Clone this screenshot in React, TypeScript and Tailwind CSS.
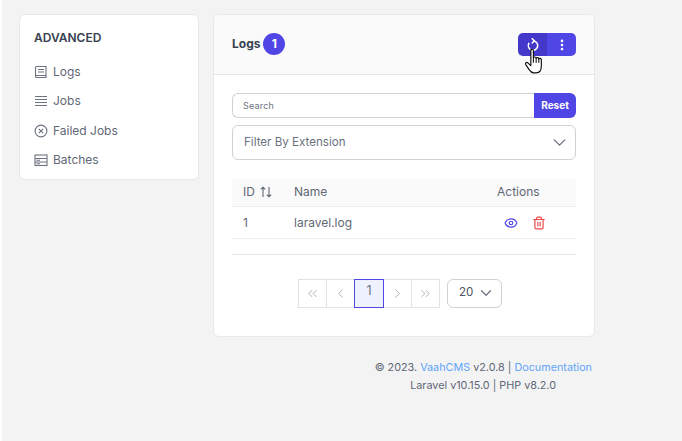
import React from "react";
import { EllipsisVertical, ChevronDown, ChevronsLeft, ChevronLeft, ChevronRight, ChevronsRight, Eye, Trash2 } from "lucide-react";

const Doc = () => (
  <svg width="14" height="14" viewBox="0 0 14 14" fill="none" stroke="#6b7280" strokeWidth="1.1">
    <path d="M2.5 1.5H12V12.5H2.5C1.8 12.5 1.5 12 1.5 11.5V2.5C1.5 2 1.8 1.5 2.5 1.5Z" />
    <path d="M4 4.5H10M4 7H10M1.5 10.5H12" />
  </svg>
);
const Bars = () => (
  <svg width="14" height="14" viewBox="0 0 14 14" fill="none" stroke="#6b7280" strokeWidth="1">
    <path d="M1 2.5H13M1 5.5H13M1 8.5H13M1 11.5H13" />
  </svg>
);
const CircleX = () => (
  <svg width="14" height="14" viewBox="0 0 14 14" fill="none" stroke="#6b7280" strokeWidth="1.1">
    <circle cx="7" cy="7" r="5.9" />
    <path d="M4.8 4.8L9.2 9.2M9.2 4.8L4.8 9.2" />
  </svg>
);
const Server = () => (
  <svg width="14" height="14" viewBox="0 0 14 14" fill="none" stroke="#6b7280" strokeWidth="1.1">
    <rect x="1" y="2" width="12" height="10.5" />
    <path d="M1 5.5H13M1 9H13M2.5 7.2H6M2.5 10.8H6" />
  </svg>
);
const Refresh = () => (
  <svg width="14" height="14" viewBox="0 0 14 14" fill="none" stroke="#fff" strokeWidth="1.5">
    <path d="M7.6 2.9A4.7 4.7 0 1 1 2.8 5.4" strokeLinecap="round" />
    <path d="M6.2 .7L8.4 2.9L6.2 5" strokeLinecap="round" strokeLinejoin="round" />
  </svg>
);
const Sort = () => (
  <svg width="12" height="12" viewBox="0 0 12 12" fill="none" stroke="#5f6875" strokeWidth="1.1">
    <path d="M3 11V1.2M.8 3.4L3 1.2L5.2 3.4M9 1V10.8M6.8 8.6L9 10.8L11.2 8.6" />
  </svg>
);

const Hand = () => (
  <svg className="absolute left-[6px] top-[15px]" width="19" height="26" viewBox="0 0 17 24.5">
    <path
      d="M6 2.2C6 .8 8.4 .8 8.4 2.2V9.2C8.8 8.2 10.8 8.2 11 9.6C11.4 8.6 13.3 8.8 13.5 10.2C14 9.4 15.8 9.6 15.9 11.2V17C15.9 20.5 14.2 23.4 11 23.4H8.6C6.6 23.4 5.6 22.2 4.4 20.4L1.2 15.6C.4 14.2 2 13 3.2 14L6 16.6Z"
      fill="#fff"
      stroke="#111"
      strokeWidth="1.1"
      strokeLinejoin="round"
    />
    <path d="M8.4 9.2V14M11 9.6V14M13.5 10.2V14" stroke="#111" strokeWidth="1" fill="none" />
  </svg>
);

const menu: [string, React.ReactNode][] = [
  ["Logs", <Doc />],
  ["Jobs", <Bars />],
  ["Failed Jobs", <CircleX />],
  ["Batches", <Server />],
];

const PageBtn = ({ children, active }: { children: React.ReactNode; active?: boolean }) => (
  <div
    className={
      active
        ? "w-[30px] h-[29px] -ml-px flex items-center justify-center border border-[#4f46e5] bg-[#eef2ff] text-[#6b7280] text-[12.5px] pb-[3px] relative"
        : "w-[29px] h-[29px] -ml-px first:ml-0 flex items-center justify-center border border-[#e2e2e2] bg-white text-[#a8aeb8]"
    }
  >
    {children}
  </div>
);

export default function App() {
  return (
    <div className="h-[441px] w-[682px] overflow-hidden bg-white pl-[2px] font-['Inter',sans-serif]">
      <div className="h-full bg-[#f3f3f3] pl-[17px] pt-[14px] flex items-start gap-[14px]">
        <aside className="w-[180px] h-[166px] bg-white border border-[#e8e8e8] rounded-[6px] pl-[14px] pt-[15px]">
          <h3 className="text-[12px] leading-[16px] font-semibold text-[#374151]">ADVANCED</h3>
          <ul className="mt-[11.3px] flex flex-col">
            {menu.map(([label, icon]) => (
              <li key={label} className="h-[29.4px] flex items-center gap-[5px] text-[12px] text-[#5f6875]">
                {icon}
                <span>{label}</span>
              </li>
            ))}
          </ul>
        </aside>

        <div className="w-[382px]">
          <main className="h-[323px] bg-white border border-[#e8e8e8] rounded-[6px] overflow-hidden">
            <header className="h-[60px] bg-[#fafafa] border-b border-[#e5e7eb] flex items-center justify-between pl-[18px] pr-[18px]">
              <div className="flex items-center gap-[3px] -mt-[2px]">
                <span className="text-[12px] font-bold text-[#374151]">Logs</span>
                <span className="w-[22px] h-[22px] rounded-full bg-[#4f46e5] text-white text-[12px] font-bold flex items-center justify-center">1</span>
              </div>
              <div className="relative flex h-[23px] w-[58px] rounded-[5px] overflow-visible">
                <div className="w-[29px] bg-[#4338ca] rounded-l-[5px] flex items-center justify-center">
                  <Refresh />
                </div>
                <div className="w-[29px] bg-[#4f46e5] rounded-r-[5px] flex items-center justify-center">
                  <EllipsisVertical size={14} color="#fff" strokeWidth={2.5} />
                </div>
                <Hand />
              </div>
            </header>

            <section className="px-[18px] pt-[18px]">
              <div className="flex h-[25px]">
                <div className="flex-1 border border-[#d1d1d1] border-r-0 rounded-l-[6px] flex items-center pl-[10px] text-[9px] text-[#6b7280] tracking-[0.2px]">Search</div>
                <button className="w-[42px] bg-[#4f46e5] text-white text-[10px] font-bold rounded-r-[6px]">Reset</button>
              </div>
              <div className="mt-[7px] h-[35px] border border-[#d1d1d1] rounded-[6px] flex items-center justify-between pl-[11px] pr-[5px] text-[11.6px] text-[#6b7280]">
                <span>Filter By Extension</span>
                <ChevronDown size={21} color="#6b7280" strokeWidth={1.6} />
              </div>

              <table className="mt-[18px] w-full text-[12px] text-[#5f6875] border-collapse">
                <thead>
                  <tr className="h-[28px] bg-[#fafafa] border-b border-[#eeeeee]">
                    <th className="w-[62px] pl-[11px] font-normal text-left pt-px">
                      <span className="flex items-center gap-[5px]">
                        ID
                        <Sort />
                      </span>
                    </th>
                    <th className="font-normal text-left pt-px">Name</th>
                    <th className="w-[79px] font-normal text-left pt-px">Actions</th>
                  </tr>
                </thead>
                <tbody>
                  <tr className="h-[32px] border-b border-[#eeeeee]">
                    <td className="pl-[11px] pt-px">1</td>
                    <td className="pt-px">laravel.log</td>
                    <td className="pt-px">
                      <div className="flex items-center gap-[14px] pl-[7px]">
                        <Eye size={14} color="#4f46e5" />
                        <Trash2 size={14} color="#ef4444" />
                      </div>
                    </td>
                  </tr>
                </tbody>
              </table>

              <div className="mt-[15px] border-t border-[#e5e7eb] pt-[24px] pr-[8px] flex justify-center gap-[7px]">
                <div className="flex">
                  <PageBtn><ChevronsLeft size={15} strokeWidth={1.5} /></PageBtn>
                  <PageBtn><ChevronLeft size={15} strokeWidth={1.5} /></PageBtn>
                  <PageBtn active>1</PageBtn>
                  <PageBtn><ChevronRight size={15} strokeWidth={1.5} /></PageBtn>
                  <PageBtn><ChevronsRight size={15} strokeWidth={1.5} /></PageBtn>
                </div>
                <div className="w-[55px] h-[29px] border border-[#d1d1d1] rounded-[6px] flex items-center justify-between pl-[11px] pr-[6px] text-[11.6px] text-[#4b5563]">
                  <span>20</span>
                  <ChevronDown size={18} color="#6b7280" strokeWidth={1.6} />
                </div>
              </div>
            </section>
          </main>

          <footer className="mt-[22px] pr-[3px] text-right text-[10.8px] leading-[18px] text-[#5f6875]">
            <div>
              © 2023. <span className="text-[#60a5fa]">VaahCMS</span> v2.0.8 | <span className="text-[#60a5fa]">Documentation</span>
            </div>
            <div className="pr-[36px]">Laravel v10.15.0 | PHP v8.2.0</div>
          </footer>
        </div>
      </div>
    </div>
  );
}
